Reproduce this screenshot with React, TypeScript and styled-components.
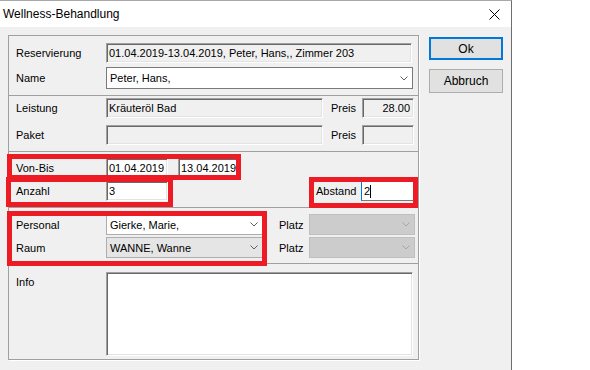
import styled, { createGlobalStyle } from "styled-components";

const GlobalStyle = createGlobalStyle`
  body {
    margin: 0;
    background: #ffffff;
  }
  * {
    box-sizing: border-box;
  }
`;

const Dialog = styled.div`
  position: relative;
  width: 512px;
  height: 370px;
  overflow: hidden;
  background: #f0f0f0;
  border-top: 1px solid #a8a8a8;
  border-right: 1px solid #6e6e6e;
  font-family: "Liberation Sans", Arial, sans-serif;
  font-size: 11px;
  color: #000;
`;

const TitleBar = styled.div`
  height: 26px;
  background: #ffffff;
  display: flex;
  align-items: center;
  justify-content: space-between;
  padding-left: 3px;
  font-size: 12px;
`;

const CloseIcon = styled.svg`
  margin-right: 11px;
`;

const Body = styled.div`
  display: flex;
  align-items: flex-start;
  padding: 8px 0 0 8px;
`;

const GroupBox = styled.div`
  width: 411px;
  border: 1px solid #a0a0a0;
  box-shadow: 1px 1px 0 #ffffff;
`;

const Section = styled.div<{ $pt: number; $pb: number; $gap: number; $first?: boolean }>`
  display: flex;
  flex-direction: column;
  gap: ${(p) => p.$gap}px;
  padding: ${(p) => p.$pt}px 0 ${(p) => p.$pb}px 7px;
  border-top: ${(p) => (p.$first ? "none" : "1px solid #a0a0a0")};
`;

const Row = styled.div<{ $h: number; $top?: boolean }>`
  display: flex;
  align-items: ${(p) => (p.$top ? "flex-start" : "center")};
  height: ${(p) => p.$h}px;
`;

const Label = styled.span<{ $w: number; $ml?: number; $pt?: number }>`
  flex: none;
  width: ${(p) => p.$w}px;
  margin-left: ${(p) => p.$ml ?? 0}px;
  padding-top: ${(p) => p.$pt ?? 0}px;
  white-space: nowrap;
`;

const Field = styled.div<{ $w: number; $bg?: string; $right?: boolean; $ml?: number }>`
  flex: none;
  width: ${(p) => p.$w}px;
  height: 100%;
  margin-left: ${(p) => p.$ml ?? 0}px;
  display: flex;
  align-items: center;
  justify-content: ${(p) => (p.$right ? "flex-end" : "flex-start")};
  padding: 0 3px 0 2px;
  background: ${(p) => p.$bg ?? "#f0f0f0"};
  border: 1px solid;
  border-color: #a0a0a0 #ffffff #ffffff #a0a0a0;
  box-shadow: inset 1px 1px 0 #696969, inset -1px -1px 0 #e3e3e3;
  white-space: nowrap;
  overflow: hidden;
`;

const Memo = styled(Field)`
  height: 84px;
`;

const FocusEdit = styled.div`
  flex: none;
  width: 54px;
  height: 100%;
  margin-left: 0;
  display: flex;
  align-items: center;
  padding-left: 2px;
  background: #ffffff;
  border: 1px solid #7a7a7a;
  border-left-color: #0078d7;
`;

const Caret = styled.span`
  display: inline-block;
  width: 1px;
  height: 13px;
  background: #000;
`;

const Combo = styled.div<{ $w: number; $bg: string; $border: string; $arrow: string; $ml?: number }>`
  flex: none;
  width: ${(p) => p.$w}px;
  height: 100%;
  margin-left: ${(p) => p.$ml ?? 0}px;
  display: flex;
  align-items: center;
  padding-left: 3px;
  background: ${(p) => p.$bg};
  border: 1px solid ${(p) => p.$border};
  color: #000;
  svg {
    margin-left: auto;
    margin-right: 4px;
    stroke: ${(p) => p.$arrow};
  }
`;

const Spacer = styled.div`
  flex: 1;
`;

const Buttons = styled.div`
  display: flex;
  flex-direction: column;
  gap: 9px;
  margin: 2px 0 0 10px;
`;

const Button = styled.div<{ $default?: boolean }>`
  width: 74px;
  height: ${(p) => (p.$default ? 23 : 24)}px;
  display: flex;
  align-items: center;
  justify-content: center;
  background: #e1e1e1;
  border: ${(p) => (p.$default ? "2px solid #0078d7" : "1px solid #adadad")};
  font-size: 12px;
`;

const Marker = styled.div<{ $x: number; $y: number; $w: number; $h: number }>`
  position: absolute;
  left: ${(p) => p.$x}px;
  top: ${(p) => p.$y}px;
  width: ${(p) => p.$w}px;
  height: ${(p) => p.$h}px;
  border: 5px solid #ed1c24;
  pointer-events: none;
`;

const Chevron = () => (
  <svg width="8" height="5" viewBox="0 0 8 5" fill="none" strokeWidth="1">
    <polyline points="0.5,0.5 4,4 7.5,0.5" />
  </svg>
);

const App = () => {
  return (
    <>
      <GlobalStyle />
      <Dialog>
        <TitleBar>
          <span>Wellness-Behandlung</span>
          <CloseIcon width="11" height="11" viewBox="0 0 11 11" stroke="#000" strokeWidth="1">
            <line x1="0.5" y1="0.5" x2="10.5" y2="10.5" />
            <line x1="10.5" y1="0.5" x2="0.5" y2="10.5" />
          </CloseIcon>
        </TitleBar>
        <Body>
          <GroupBox>
            <Section $first $pt={7} $gap={4} $pb={6}>
              <Row $h={20}>
                <Label $w={90}>Reservierung</Label>
                <Field $w={306}>01.04.2019-13.04.2019, Peter, Hans,, Zimmer 203</Field>
              </Row>
              <Row $h={22}>
                <Label $w={90}>Name</Label>
                <Combo $w={307} $bg="#ffffff" $border="#7a7a7a" $arrow="#606060">
                  Peter, Hans,
                  <Chevron />
                </Combo>
              </Row>
            </Section>
            <Section $pt={2} $gap={7} $pb={6}>
              <Row $h={20}>
                <Label $w={90}>Leistung</Label>
                <Field $w={217}>Kräuteröl Bad</Field>
                <Label $w={31} $ml={8}>Preis</Label>
                <Field $w={52} $right>28.00</Field>
              </Row>
              <Row $h={20}>
                <Label $w={90}>Paket</Label>
                <Field $w={217} />
                <Label $w={31} $ml={8}>Preis</Label>
                <Field $w={52} />
              </Row>
            </Section>
            <Section $pt={6} $gap={4} $pb={6}>
              <Row $h={19}>
                <Label $w={90}>Von-Bis</Label>
                <Field $w={62} $bg="#ffffff">01.04.2019</Field>
                <Field $w={61} $bg="#ffffff" $ml={10}>13.04.2019</Field>
              </Row>
              <Row $h={20}>
                <Label $w={90}>Anzahl</Label>
                <Field $w={62} $bg="#ffffff">3</Field>
                <Spacer />
                <Label $w={45}>Abstand</Label>
                <FocusEdit>
                  2
                  <Caret />
                </FocusEdit>
                <Label $w={3} />
              </Row>
            </Section>
            <Section $pt={6} $gap={2} $pb={5}>
              <Row $h={21}>
                <Label $w={90}>Personal</Label>
                <Combo $w={157} $bg="#ffffff" $border="#adadad" $arrow="#606060">
                  Gierke, Marie,
                  <Chevron />
                </Combo>
                <Label $w={30} $ml={16}>Platz</Label>
                <Combo $w={106} $bg="#cccccc" $border="#bfbfbf" $arrow="#a6a6a6">
                  <Chevron />
                </Combo>
              </Row>
              <Row $h={21}>
                <Label $w={90}>Raum</Label>
                <Combo $w={157} $bg="#e5e5e5" $border="#adadad" $arrow="#606060">
                  WANNE, Wanne
                  <Chevron />
                </Combo>
                <Label $w={30} $ml={16}>Platz</Label>
                <Combo $w={106} $bg="#cccccc" $border="#bfbfbf" $arrow="#a6a6a6">
                  <Chevron />
                </Combo>
              </Row>
            </Section>
            <Section $pt={8} $gap={0} $pb={3}>
              <Row $h={84} $top>
                <Label $w={90} $pt={4}>Info</Label>
                <Memo $w={307} $bg="#ffffff" />
              </Row>
            </Section>
          </GroupBox>
          <Buttons>
            <Button $default>Ok</Button>
            <Button>Abbruch</Button>
          </Buttons>
        </Body>
        <Marker $x={7} $y={153} $w={234} $h={26} />
        <Marker $x={6} $y={176} $w={167} $h={30} />
        <Marker $x={309} $y={176} $w={109} $h={31} />
        <Marker $x={7} $y={210} $w={260} $h={55} />
      </Dialog>
    </>
  );
};

export default App;
